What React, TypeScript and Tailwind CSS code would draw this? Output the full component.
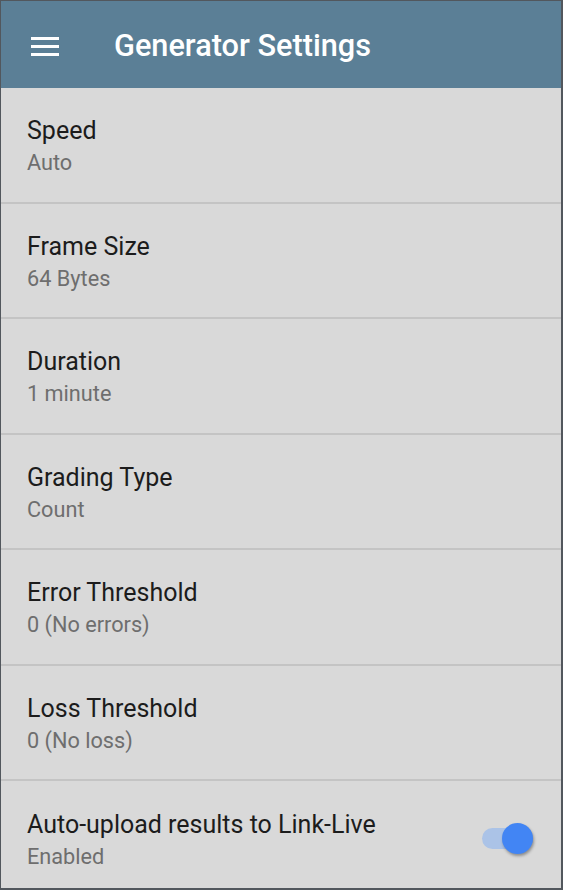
import React from "react";

const settings = [
  { label: "Speed", value: "Auto" },
  { label: "Frame Size", value: "64 Bytes" },
  { label: "Duration", value: "1 minute" },
  { label: "Grading Type", value: "Count" },
  { label: "Error Threshold", value: "0 (No errors)" },
  { label: "Loss Threshold", value: "0 (No loss)" },
];

const Row = ({ label, value }: { label: string; value: string }) => (
  <div className="flex h-[115.5px] shrink-0 flex-col justify-center border-b-2 border-[#c4c4c4] pl-[26px] pt-[5px]">
    <div className="text-[25px] leading-[32px] text-[#1c1c1c]">{label}</div>
    <div className="text-[21.7px] leading-[32px] text-[#6e6e6e]">{value}</div>
  </div>
);

const App = () => {
  return (
    <div
      className="flex h-[890px] w-[563px] flex-col overflow-hidden border-t border-l border-r-2 border-b-2 border-[#52575d] bg-[#d9d9d9]"
      style={{ fontFamily: "Roboto, 'Noto Sans', sans-serif" }}
    >
      <div className="flex h-[87px] shrink-0 items-center bg-[#5b7f96] pt-[4px]">
        <div className="ml-[30px] flex w-[28px] flex-col gap-[5px]">
          <div className="h-[3px] bg-white" />
          <div className="h-[3px] bg-white" />
          <div className="h-[3px] bg-white" />
        </div>
        <div className="ml-[55px] text-[30.7px] font-medium text-white">Generator Settings</div>
      </div>
      {settings.map((s) => (
        <Row key={s.label} label={s.label} value={s.value} />
      ))}
      <div className="flex flex-1 items-center justify-between pl-[26px] pr-[28px] pt-[7px]">
        <div className="mt-[6px] flex flex-col">
          <div className="text-[25px] leading-[32px] text-[#1c1c1c]">Auto-upload results to Link-Live</div>
          <div className="text-[21.7px] leading-[32px] text-[#6e6e6e]">Enabled</div>
        </div>
        <div className="relative h-[31px] w-[51px]">
          <div className="absolute left-0 top-[5px] h-[21px] w-[51px] rounded-full bg-[#abc3e7]" />
          <div className="absolute right-0 top-0 h-[31px] w-[31px] rounded-full bg-[#4285f4] shadow-[1px_2px_3px_rgba(0,0,0,0.35)]" />
        </div>
      </div>
    </div>
  );
};

export default App;
